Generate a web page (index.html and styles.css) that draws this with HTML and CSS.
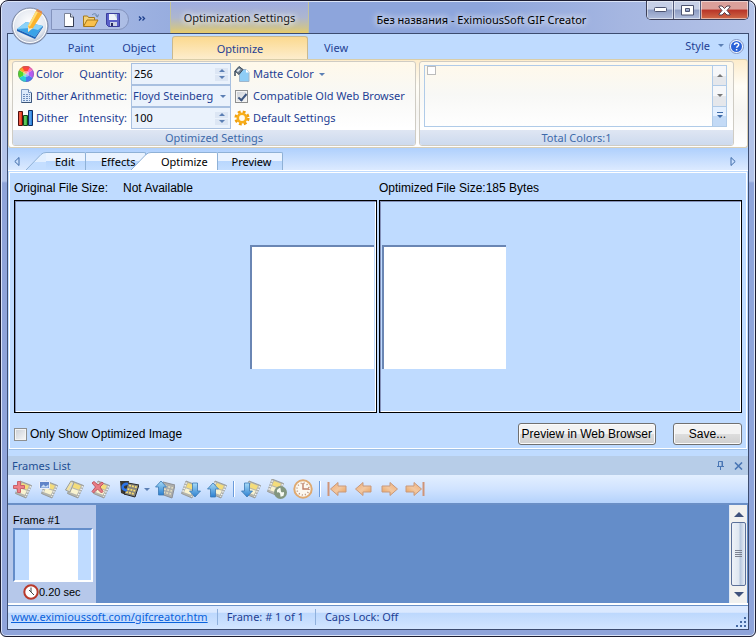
FILE: index.html
```html
<!DOCTYPE html>
<html lang="en">
<head>
<meta charset="utf-8">
<title>Без названия - EximiousSoft GIF Creator</title>
<link rel="stylesheet" href="styles.css">
</head>
<body>
<svg class="defs" aria-hidden="true">
  <defs>
    <linearGradient id="gBlue" x1="0" y1="0" x2="0" y2="1"><stop offset="0" stop-color="#a8dcf8"/><stop offset="1" stop-color="#2b7fd0"/></linearGradient>
    <linearGradient id="gArrow" x1="0" y1="0" x2="1" y2="1"><stop offset="0" stop-color="#f0ac70"/><stop offset=".5" stop-color="#f2c8a2"/><stop offset="1" stop-color="#e89c50"/></linearGradient>
    <radialGradient id="gOrb" cx=".5" cy=".4" r=".6"><stop offset="0" stop-color="#fff"/><stop offset=".7" stop-color="#e3e8f0"/><stop offset="1" stop-color="#a9b3c8"/></radialGradient>
    <g id="film">
      <path d="M8 2l11.500 4.500L14 19 3.500 14.500z" fill="#b4b2a6" stroke="#8a897f" stroke-width=".8"/>
      <path d="M10 4l7 2.800-1.900 4-7-2.600z" fill="#f8dc6c"/>
      <path d="M7.800 9.200l7 2.600-2 4-6.800-2.600z" fill="#fff6cc"/>
      <path d="M8.300 3.500L4.400 13.800M18.600 7.200L13.700 18" stroke="#fff" stroke-width="1.400" stroke-dasharray="1.400 1.400" fill="none"/>
    </g>
    <path id="up" d="M6 2l5.500 6H8.500v8H3.500V8H.5z" fill="url(#gBlue)" stroke="#3b78b4" stroke-width=".8"/>
    <path id="down" d="M6 16l5.500-6H8.500V2H3.500v8H.5z" fill="url(#gBlue)" stroke="#3b78b4" stroke-width=".8"/>
    <path id="arrowL" d="M1.500 10L9 3.500v3.500h8v6H9v3.500z" fill="url(#gArrow)" stroke="#c8997c" stroke-width="1"/>
  </defs>
</svg>
<div class="window">
  <header class="titlebar">
    <div class="quick">
      <button class="bare" aria-label="New"><svg width="16" height="16" viewBox="0 0 16 16"><path d="M3.500 1.500h6l3 3.500v9.500h-9z" fill="#fff" stroke="#7c8498"/><path d="M9.500 1.500V5h3" fill="#d5dcea" stroke="#4f586e"/><path d="M12.500 5v9.500h-9" fill="none" stroke="#343c52"/></svg></button>
      <button class="bare" aria-label="Open"><svg width="18" height="16" viewBox="0 0 18 16"><path d="M1.500 14V4h4l1 1.500h6V8" fill="#f4d27a" stroke="#a67a1c"/><path d="M1.500 14.500L5 8h11l-3.500 6.500z" fill="#f9c04c" stroke="#a8781a"/><path d="M10 3c2-2 4.500-1.500 5 1M13.500 3.500l2 1.500 1-2.500" fill="none" stroke="#6785a8"/></svg></button>
      <button class="bare" aria-label="Save file"><svg width="16" height="16" viewBox="0 0 16 16"><path d="M1.500 1.500h13v13h-11l-2-2z" fill="#5a60c8" stroke="#3a3e9c"/><path d="M4 2h8v6H4z" fill="#eef2fb"/><path d="M9 2h3v5z" fill="#bcd"/><path d="M5 10h7v4H5z" fill="#c9d2e6"/><path d="M6 11h2v3H6z" fill="#262a60"/></svg></button>
    </div>
    <button class="bare chevrons" aria-label="Customize"><svg width="8" height="5" viewBox="0 0 8 5"><path d="M1 .5l2 2-2 2M4.500.5l2 2-2 2" fill="none" stroke="#1d3f8c" stroke-width="1.300"/></svg></button>
    <div class="context">Optimization Settings</div>
    <h1 class="caption">Без названия - EximiousSoft GIF Creator</h1>
    <div class="winbtns">
      <button aria-label="Minimize"><svg width="13" height="6" viewBox="0 0 13 6"><rect x=".5" y=".5" width="12" height="4" rx="1" fill="#fff" stroke="#4c5370"/></svg></button>
      <button aria-label="Maximize"><svg width="13" height="11" viewBox="0 0 13 11"><path d="M.5.5h12v9.500H.5zM4.500 3.500v3h4v-3z" fill="#fff" stroke="#4c5370" fill-rule="evenodd"/></svg></button>
      <button class="x" aria-label="Close"><svg width="13" height="11" viewBox="0 0 13 11"><path d="M1 1h3l2.500 2.500L9 1h3v1L9 5.500 12 9v1H9L6.500 7.500 4 10H1V9l3-3.500L1 2z" fill="#fff" stroke="#56404c"/></svg></button>
    </div>
  </header>
  <button class="orb bare" aria-label="Application menu"><svg width="38" height="38" viewBox="0 0 38 38"><circle cx="19" cy="19" r="18" fill="url(#gOrb)" stroke="#7884a0"/><circle cx="19" cy="19" r="16.500" fill="none" stroke="#fff"/><path d="M6 22l9-7 17 4-8 11z" fill="#3aa3e8"/><path d="M6 22l9-7 17 4-5 4-8-2z" fill="#8bd2f8"/><path d="M6 22v2l18 8 8-12v-1l-8 11z" fill="#1a62b8"/><path d="M17 19L25 4l6 3-9 14-5 4z" fill="#fbb32c"/><path d="M19 19.500L27 5l-2-1-8 15z" fill="#fde07c"/><path d="M25 4l1-2 5 2.500V7z" fill="#e08a4c"/><path d="M17 19l1 2.500 4-.5-5 4z" fill="#fbe8cc"/></svg></button>

  <main class="client">
    <nav class="ribbon-tabs">
      <button class="rtab paint">Paint</button>
      <button class="rtab">Object</button>
      <button class="rtab active">Optimize</button>
      <button class="rtab view">View</button>
      <span class="grow"></span>
      <button class="style">Style <i class="tri"></i></button>
      <button class="bare help" aria-label="Help"><svg width="15" height="15" viewBox="0 0 15 15"><circle cx="7.500" cy="7.500" r="7" fill="#f4f8ff" stroke="#7f95c4"/><circle cx="7.500" cy="7.500" r="5.500" fill="#2b63d8"/><path d="M5.500 6c0-2.500 4.200-2.500 4.200-.2 0 1.500-2 1.500-2.100 3M7.600 10v1.600" fill="none" stroke="#fff" stroke-width="1.500"/></svg></button>
    </nav>

    <section class="ribbon">
      <div class="group settings">
        <div class="fields">
          <svg width="16" height="16" viewBox="0 0 16 16"><path d="M8 8V0a8 8 0 0 1 6.900 4z" fill="#ff6cc0"/><path d="M8 8l6.900-4a8 8 0 0 1 0 8z" fill="#b45cf0"/><path d="M8 8l6.900 4A8 8 0 0 1 8 16z" fill="#4878f5"/><path d="M8 8v8a8 8 0 0 1-6.900-4z" fill="#28d0d8"/><path d="M8 8l-6.900 4a8 8 0 0 1 0-8z" fill="#50d828"/><path d="M8 8L1.100 4A8 8 0 0 1 8 0z" fill="#ffa828"/><path d="M4 1.100A8 8 0 0 1 12 1.100L8 8z" fill="#ff4838"/><circle cx="8" cy="8" r="3" fill="#fff" opacity=".45"/><circle cx="8" cy="8" r="7.500" fill="none" stroke="#768" opacity=".4"/></svg>
          <label class="pair" for="qty"><span>Color</span><span>Quantity:</span></label>
          <div class="field"><input id="qty" type="text" value="256"><span class="spin"><button aria-label="More colors"><i class="tri up"></i></button><button aria-label="Fewer colors"><i class="tri"></i></button></span></div>
          <button class="cmd"><svg width="16" height="16" viewBox="0 0 16 16"><path d="M5.500 3.500h7l2.500 3v9h-9.500z" fill="#8fcdf6" stroke="#9fb6cc"/><path d="M12 3l3 3.500h-3z" fill="#fff"/><path d="M1 5l4-4.500 4 3-4 5z" fill="#718090" stroke="#3a4a5c"/><path d="M2.500 5L5 2.500l1.500 1L4 6z" fill="#e9eef4"/><path d="M1 5v5" stroke="#3a4a5c" stroke-width="1.500"/></svg>Matte Color <i class="tri"></i></button>

          <svg width="16" height="16" viewBox="0 0 16 16"><path d="M3.500 1.500h7l3 3v10h-10z" fill="#dceafb" stroke="#7f9cc4"/><path d="M13.500 5v9.500h-10" fill="none" stroke="#3c5578"/><path d="M10.500 1.500v3h3" fill="#fff" stroke="#6f8db8"/><path d="M5 6.500h7M5 8.500h7M5 10.500h7M5 12.500h7" stroke="#6d8cba" stroke-dasharray="2 1"/></svg>
          <label class="pair" for="dither"><span>Dither</span><span>Arithmetic:</span></label>
          <div class="field"><select id="dither"><option>Floyd Steinberg</option></select><i class="tri drop"></i></div>
          <label class="cmd check"><input type="checkbox" checked>Compatible Old Web Browser</label>

          <svg width="16" height="16" viewBox="0 0 16 16"><path d="M.5 1.500h4v14h-4z" fill="#e8381c" stroke="#501010"/><path d="M5.500 5.500h4v10h-4z" fill="#3cb83c" stroke="#104818"/><path d="M10.500.5h4v15h-4z" fill="#3088e0" stroke="#102c60"/><path d="M2 2v13M7 6v9M12 1v14" stroke="#fff" opacity=".35"/></svg>
          <label class="pair" for="intensity"><span>Dither</span><span>Intensity:</span></label>
          <div class="field"><input id="intensity" type="text" value="100"><span class="spin"><button aria-label="Raise intensity"><i class="tri up"></i></button><button aria-label="Lower intensity"><i class="tri"></i></button></span></div>
          <button class="cmd"><svg width="16" height="16" viewBox="0 0 16 16"><circle cx="8" cy="8" r="6.300" fill="none" stroke="#f0a010" stroke-width="2.600" stroke-dasharray="2.800 2.150"/><circle cx="8" cy="8" r="4.200" fill="#fffaf0" stroke="#f8ae18" stroke-width="2.600"/></svg>Default Settings</button>
        </div>
        <h2>Optimized Settings</h2>
      </div>
      <div class="group colors">
        <div class="gallery">
          <div class="swatches"><button class="swatch" aria-label="White"></button></div>
          <div class="gscroll"><button aria-label="Scroll up"><i class="tri up"></i></button><button aria-label="Scroll down"><i class="tri"></i></button><button class="more" aria-label="All colors"><i class="tri bar"></i></button></div>
        </div>
        <h2>Total Colors:1</h2>
      </div>
    </section>

    <nav class="doc-tabs">
      <button class="bare nav" aria-label="Previous tabs"><svg width="6" height="9" viewBox="0 0 6 9"><path d="M5 .5v8L.8 4.500z" fill="none" stroke="#3f6ba8"/></svg></button>
      <button class="dtab edit"><svg class="slant" width="20" height="18" viewBox="0 0 20 18"><path d="M0 18L15 2.500Q17 .5 20 .5V18z" fill="#e2efff"/><path d="M8 10h12v8H0z" fill="#c4deff"/><path d="M0 18L15 2.500Q17 .5 20 .5" fill="none" stroke="#8fb1d6"/></svg><span>Edit</span></button>
      <button class="dtab effects"><span>Effects</span></button>
      <button class="dtab current"><svg class="slant" width="20" height="18" viewBox="0 0 20 18"><path d="M0 18L15 2.500Q17 .5 20 .5V18z" fill="#fff"/><path d="M0 18L15 2.500Q17 .5 20 .5" fill="none" stroke="#8fb1d6"/></svg><span>Optimize</span></button>
      <button class="dtab preview"><span>Preview</span></button>
      <span class="grow"></span>
      <button class="bare nav" aria-label="Next tabs"><svg width="6" height="9" viewBox="0 0 6 9"><path d="M1 .5v8l4.200-4z" fill="none" stroke="#3f6ba8"/></svg></button>
    </nav>

    <section class="page">
      <div class="views">
        <div class="view-col">
          <p><span>Original File Size:</span><span class="value">Not Available</span></p>
          <div class="pane left"><div class="canvas"></div></div>
        </div>
        <div class="view-col">
          <p>Optimized File Size:185 Bytes</p>
          <div class="pane"><div class="canvas"></div></div>
        </div>
      </div>
      <div class="actions">
        <label class="only"><input type="checkbox">Only Show Optimized Image</label>
        <span class="grow"></span>
        <button class="push">Preview in Web Browser</button>
        <button class="push save">Save...</button>
      </div>
    </section>

    <section class="frames">
      <div class="frames-head">
        <h2>Frames List</h2>
        <button class="bare" aria-label="Pin"><svg width="8" height="9" viewBox="0 0 8 9"><path d="M1.500 5.500v-5h4v5M5 .5v5M0 5.500h7M3.500 5.500V9" fill="none" stroke="#4a76b4"/></svg></button>
        <button class="bare" aria-label="Close panel"><svg width="9" height="8" viewBox="0 0 9 8"><path d="M1 .5l7 7M8 .5l-7 7" stroke="#4a76b4" stroke-width="1.600"/></svg></button>
      </div>
      <div class="toolbar">
        <button class="tool" aria-label="Add frame"><svg viewBox="0 0 20 20"><g class="soft"><use href="#film"/></g><path d="M5.500 2.500h3v4h4v3h-4v4h-3v-4h-4v-3h4z" fill="#ee8088" stroke="#c8626c"/></svg></button>
        <button class="tool" aria-label="Add image"><svg viewBox="0 0 20 20"><g class="soft"><use href="#film"/></g><path d="M1.500 2.500h10v7h-10z" fill="#5f84c8" stroke="#e8eefa"/><path d="M2.500 8.500l3-3 2 2 3-2v3z" fill="#c7dcf4"/></svg></button>
        <button class="tool" aria-label="Edit frame"><svg viewBox="0 0 20 20"><g class="soft"><use href="#film"/><path d="M1.500 11L7 2l3 1.500L6 13z" fill="#d8d6c8" stroke="#989888"/><path d="M3.500 11l4-7" stroke="#fbe48c" stroke-width="1.600"/></g></svg></button>
        <button class="tool" aria-label="Delete frame"><svg viewBox="0 0 20 20"><g class="soft"><use href="#film"/></g><path d="M2 4l2-1.500 4 3.500 4-3 1.500 1.500L10 8l3 4.500-1.500 1.500-4-4L3.500 14 2 12.500 5.500 8z" fill="#e87c84" stroke="#c05862"/></svg></button>
        <button class="tool wide" aria-label="Rotate frame"><svg viewBox="0 0 20 20"><path d="M1 2h9l-3 14-5-2z" fill="#3c3830"/><path d="M9 4l11 2-4 12-11-3z" fill="#88867c" stroke="#282828"/><path d="M10 6.500l8 2M8.500 10l8 2M7 13l8 2" stroke="#f8dc70" stroke-width="1.800" stroke-dasharray="2 1"/><path d="M9 5C2 4 2 12 8 11" fill="none" stroke="#2c74e8" stroke-width="2.600"/></svg></button>
        <i class="tri menu"></i>
        <button class="tool" aria-label="Move first"><svg viewBox="0 0 20 20"><g class="soft"><path d="M8 3l12 3-3 13-11-4z" fill="#aaa9a4" stroke="#85868a"/><path d="M10 7l8 2M9 10l8 2M8 13l8 2" stroke="#e8dfbc" stroke-dasharray="2 1.300" stroke-width="1.600"/></g><use href="#up"/></svg></button>
        <button class="tool" aria-label="Move last"><svg viewBox="0 0 20 20"><g class="soft"><use href="#film" x="-3"/></g><use href="#down" x="8" y="2"/></svg></button>
        <button class="tool" aria-label="Move up"><svg viewBox="0 0 20 20"><g class="soft"><use href="#film"/></g><use href="#up" y="2"/></svg></button>
        <i class="sep"></i>
        <button class="tool" aria-label="Move down"><svg viewBox="0 0 20 20"><g class="soft"><use href="#film"/></g><use href="#down" y="2"/></svg></button>
        <button class="tool" aria-label="Frame properties"><svg viewBox="0 0 20 20"><g class="soft"><use href="#film" x="-3" y="-2"/></g><circle cx="13.500" cy="13.500" r="6.500" fill="#83967f"/><path d="M10.500 10.500l6 6M10 12.500l3-.5-.5-3M17 14l-3 .5.5 3" stroke="#f6faf4" stroke-width="1.800" fill="none"/></svg></button>
        <button class="tool" aria-label="Frame delay"><svg viewBox="0 0 20 20"><circle cx="10" cy="10" r="8.700" fill="#fcf8f0" stroke="#dfa970" stroke-width="2"/><circle cx="10" cy="10" r="6" fill="none" stroke="#b89480" stroke-width="1.600" stroke-dasharray="1 2.140"/><path d="M10 4v6h6" fill="none" stroke="#c08068" stroke-width="1.400"/></svg></button>
        <i class="sep"></i>
        <button class="tool" aria-label="First frame"><svg viewBox="0 0 20 20"><path d="M1.500 3v14" stroke="#cf9478" stroke-width="2"/><use href="#arrowL" x="2"/></svg></button>
        <button class="tool" aria-label="Previous frame"><svg viewBox="0 0 20 20"><use href="#arrowL" x="1"/></svg></button>
        <button class="tool" aria-label="Next frame"><svg viewBox="0 0 20 20"><use href="#arrowL" transform="matrix(-1 0 0 1 20 0)"/></svg></button>
        <button class="tool" aria-label="Last frame"><svg viewBox="0 0 20 20"><path d="M18.500 3v14" stroke="#cf9478" stroke-width="2"/><use href="#arrowL" transform="matrix(-1 0 0 1 18 0)"/></svg></button>
      </div>
      <div class="strip">
        <div class="frame">
          <span>Frame #1</span>
          <div class="thumb"><div></div></div>
          <span class="delay"><svg width="16" height="16" viewBox="0 0 16 16"><circle cx="8" cy="8" r="6.700" fill="#fff" stroke="#b83a2c" stroke-width="2"/><path d="M8 3.500V8l3 3M8 8L6 6" fill="none" stroke="#444"/></svg>0.20 sec</span>
        </div>
        <div class="vscroll">
          <button class="bare" aria-label="Scroll frames up"><svg width="10" height="5" viewBox="0 0 10 5"><path d="M5 0l5 5H0z" fill="#3f527c"/></svg></button>
          <div class="thumbbar"><svg width="7" height="8" viewBox="0 0 7 8"><path d="M0 .5h7M0 2.500h7M0 4.500h7M0 6.500h7" stroke="#7d8290"/></svg></div>
          <button class="bare" aria-label="Scroll frames down"><svg width="10" height="5" viewBox="0 0 10 5"><path d="M5 5l5-5H0z" fill="#3f527c"/></svg></button>
        </div>
      </div>
    </section>

    <footer class="status">
      <a href="#">www.eximioussoft.com/gifcreator.htm</a>
      <span>Frame: # 1 of 1</span>
      <span>Caps Lock: Off</span>
      <svg class="grip" width="12" height="12" viewBox="0 0 12 12"><path d="M9 1h2v2H9zM5 5h2v2H5zM9 5h2v2H9zM1 9h2v2H1zM5 9h2v2H5zM9 9h2v2H9z" fill="#456aa4"/></svg>
    </footer>
  </main>
</div>
</body>
</html>
```
FILE: styles.css
```css
* { box-sizing: border-box; }
body { margin: 0; font: 11px/16px "Noto Sans", "Open Sans", sans-serif; color: #000; background: #fff; }
button, input, select { font: inherit; color: inherit; margin: 0; padding: 0; border: 0; background: none; }
svg { display: block; flex: none; }
h1, h2, p { margin: 0; font: inherit; }
.defs { position: absolute; width: 0; height: 0; }
.grow { flex: 1; }
.bare { display: flex; align-items: center; justify-content: center; }

.window {
  position: relative; display: flex; flex-direction: column; min-height: 100vh; padding: 0 6px 6px;
  border: 1px solid #1b1c30; border-radius: 8px 8px 6px 6px;
  background: linear-gradient(#b3c3e9 0, #b3c3e9 180px, #8fa4da 182px);
  box-shadow: inset 0 0 0 1px #dbe4f8;
}

/* title bar */
.titlebar {
  display: flex; align-items: stretch; height: 31px; margin: 1px -5px 0; padding-left: 49px;
  border-radius: 7px 7px 0 0;
  background: linear-gradient(90deg, #b4c4ea, #a2b5e2 100px, #8da5dc 240px, #8da5dc 480px, #a5b6e1 620px, #b4c3e8);
}
.quick { display: flex; align-items: center; gap: 6px; height: 21px; margin-top: 7px; padding: 0 7px 0 9px; border: 1px solid #8393bd; border-radius: 0 11px 11px 0; background: rgba(255,255,255,.15); }
.quick .bare { width: 16px; }
.chevrons { width: 26px; height: 32px; }
.context {
  width: 139px; margin-left: 15px; padding-top: 8px; text-align: center; color: #1a1a1a; white-space: nowrap;
  border: solid #c3c39c; border-width: 0 1px;
  background: linear-gradient(#9eade0, #adb6cf 50%, #cfc48e 85%, #e9cb68);
  text-shadow: 0 0 6px #fff, 0 0 6px #fff;
}
.caption { flex: 1; padding: 10px 0 0 8px; text-align: center; white-space: nowrap; text-shadow: 0 0 6px #fff, 0 0 8px #fff; }
.winbtns { display: flex; height: 19px; margin: -1px 5px 0 0; border: 1px solid #3d4058; border-top: 0; border-radius: 0 0 5px 5px; overflow: hidden; }
.winbtns button { display: flex; align-items: center; justify-content: center; width: 27px; border-right: 1px solid #52597a; background: linear-gradient(#c6cfe6 45%, #8d9cc3 50%, #b1bedd); box-shadow: inset 0 0 0 1px rgba(255,255,255,.5); }
.winbtns .x { width: 47px; border: 0; background: linear-gradient(#dba09a 45%, #b83428 50%, #d06a48); }
.orb { position: absolute; left: 10px; top: 6px; }

.client { flex: 1; display: flex; flex-direction: column; border: 1px solid #3c4c70; background: #bfdbff; }

/* ribbon tabs */
.ribbon-tabs { display: flex; align-items: stretch; height: 25px; padding: 0 4px 0 45px; color: #1e3f94; }
.rtab { width: 56px; padding-top: 2px; }
.paint { margin-right: 2px; }
.active { width: 136px; margin: 2px 0 -1px 5px; padding: 0; border: 1px solid #c9b98f; border-bottom: 0; border-radius: 3px 3px 0 0; background: linear-gradient(#fbd98f, #fdeed0); }
.style { display: flex; align-items: center; gap: 8px; margin-right: 5px; padding-bottom: 2px; }

.tri { display: inline-block; width: 0; height: 0; border: solid transparent; border-width: 3px 3px 0; border-top-color: #5b7fb4; }
.tri.up { border-width: 0 3px 3px; border-bottom-color: #5b7fb4; }
.tri.bar { position: relative; }
.tri.bar::before { content: ""; position: absolute; left: -3px; top: -6px; width: 6px; height: 1px; background: #3f6ba8; }

/* ribbon */
.ribbon { display: flex; gap: 3px; padding: 1px 13px 1px 3px; border: 1px solid #d9cfb6; border-top-color: #d9cda8; border-radius: 3px; background: linear-gradient(#fdeccb, #fffdf6 30%, #f6f5f2 60%, #fff); }
.group { display: flex; flex-direction: column; border: 1px solid #cfccc4; border-radius: 3px; background: linear-gradient(#fff9ea, #f8f8f6 40%, #fff 80%); overflow: hidden; color: #1e3f94; }
.settings { flex: none; width: 404px; }
.colors { flex: 1; }
.group h2 { height: 15px; line-height: 15px; text-align: center; color: #3e6aaa; background: linear-gradient(#dfe6f3, #cddaee); }
.fields { display: grid; grid-template-columns: 16px 93px 100px 1fr; grid-auto-rows: 22px; column-gap: 2px; align-items: center; height: 68px; padding: 1px 0 0 5px; }
.pair { display: flex; justify-content: space-between; padding-right: 2px; white-space: nowrap; }
.field { position: relative; display: flex; align-items: center; height: 22px; border: 1px solid #a8c0e0; background: #eaf2fc; }
.field input { width: 60px; flex: 1; padding-left: 2px; color: #000; }
.field select { width: 100%; padding-left: 1px; appearance: none; }
.drop { position: absolute; right: 4px; top: 9px; pointer-events: none; }
.spin { display: grid; gap: 1px; width: 13px; margin-right: 2px; }
.spin button { display: flex; align-items: center; justify-content: center; height: 6px; background: #dce6f4; }
.cmd { display: flex; align-items: center; gap: 3px; padding-left: 1px; text-align: left; white-space: nowrap; }
.cmd .tri { margin-left: 2px; }
input[type="checkbox"] { appearance: none; position: relative; flex: none; width: 13px; height: 13px; border: 1px solid #8e8f8f; background: linear-gradient(135deg, #c9ced6, #f8f8f8); box-shadow: inset 0 0 0 1px #f4f4f4; }
input[type="checkbox"]:checked::after { content: ""; position: absolute; left: 4px; top: 1px; width: 3px; height: 7px; border: solid #3d5680; border-width: 0 2px 2px 0; transform: rotate(40deg); }
.check { gap: 5px; padding-left: 2px; }
.gallery { display: flex; height: 62px; margin: 3px 6px 3px 4px; border: 1px solid #b0cbe8; }
.swatches { flex: 1; padding: 0 2px; }
.swatch { display: block; width: 9px; height: 9px; border: 1px solid #bbb; background: #fff; }
.gscroll { display: flex; flex-direction: column; width: 14px; border-left: 1px solid #b0cbe8; }
.gscroll button { flex: 1; display: flex; align-items: center; justify-content: center; border-bottom: 1px solid #b0cbe8; background: linear-gradient(#f6f7f9 50%, #e5e7eb 50%); }
.gscroll .tri { border-top-color: #777; }
.gscroll .tri.up { border-top-color: transparent; border-bottom-color: #777; }
.gscroll .more { border: 0; background: linear-gradient(#e4f0ff 50%, #c3daf6 50%); }
.gscroll .more .tri { border-top-color: #3f6ba8; }

/* document tabs */
.doc-tabs { display: flex; align-items: flex-end; height: 23px; padding: 0 12px 0 6px; border-bottom: 1px solid #fff; background: linear-gradient(#afd0fd, #dceaff); }
.nav { width: 6px; height: 18px; }
.dtab { display: flex; height: 18px; }
.dtab span { height: 18px; line-height: 17px; border: solid #8fb1d6; border-width: 1px 1px 0 0; border-radius: 0 2px 0 0; background: linear-gradient(#eaf3ff 50%, #b9d7fd 50%, #c4deff); }
.edit { margin-left: 6px; }
.edit span { width: 40px; padding-left: 9px; text-align: left; }
.effects span { width: 60px; padding-left: 15px; text-align: left; }
.current { margin-left: -15px; z-index: 1; }
.current span { width: 67px; padding-left: 10px; text-align: left; background: #fff; }
.preview span { width: 65px; padding-left: 3px; }

/* page */
.page { flex: 1; display: flex; flex-direction: column; margin: 1px 1px 0; padding: 7px 4px 1px; border: 1px solid #fff; box-shadow: 0 1px 0 #9dbfe6; font: 12px/16px "Liberation Sans", Arial, sans-serif; }
.views { flex: 1; display: flex; gap: 2px; }
.view-col { flex: 1; display: flex; flex-direction: column; }
.view-col p { height: 20px; }
.value { margin-left: 15px; }
.pane { flex: 1; display: flex; align-items: center; padding: 1px; min-height: 213px; border: 1px solid #000; box-shadow: inset 1px 1px 0 #8390b8, inset -1px -1px 0 #fff; }
.left { justify-content: flex-end; }
.canvas { width: 124px; height: 124px; margin: 0 1px; border: solid #6a86b4; border-width: 2px 0 0 2px; background: #fff; }
.actions { display: flex; align-items: center; gap: 17px; height: 26px; margin-top: 8px; }
.only { display: flex; align-items: center; gap: 3px; }
.push { height: 22px; padding: 0 3px; border: 1px solid #707070; border-radius: 3px; background: linear-gradient(#f3f3f3 48%, #dddddd 52%, #cfcfcf); box-shadow: inset 0 0 0 1px #fbfbfb; }
.save { width: 69px; }

/* frames */
.frames-head { display: flex; align-items: center; gap: 9px; height: 19px; margin-top: 7px; padding: 0 5px 0 4px; color: #1e4f94; background: #b7cde8; }
.frames-head h2 { flex: 1; }
.toolbar { display: flex; align-items: center; gap: 6px; height: 30px; padding-left: 4px; border-bottom: 2px solid #6a8fc6; background: linear-gradient(#e3efff, #d0e3ff 50%, #b4d2fb); }
.tool, .tool svg { width: 20px; height: 20px; }
.soft { opacity: .9; }
.wide { margin-left: 3px; }
.menu { margin: 0 -1px; }
.sep { width: 2px; height: 16px; border: solid #6a9bdc; border-width: 0 1px; border-right-color: #fff; }
.strip { display: flex; height: 98px; background: #648dc9; }
.frame { width: 88px; padding: 7px 3px 0 5px; background: #b6c8ea; font: 11px/16px "Liberation Sans", Arial, sans-serif; }
.thumb { display: flex; justify-content: center; height: 54px; border: 2px solid #fff; border-top-color: #648dc9; border-left-color: #648dc9; background: #bfdbff; }
.thumb div { width: 49px; background: #fff; }
.frame .delay { display: flex; align-items: center; height: 20px; padding-left: 10px; }
.vscroll { display: flex; flex-direction: column; width: 18px; margin: 0 1px 0 auto; padding: 1px; border-left: 1px solid #dfe8f4; background: #f1f1ef; }
.vscroll .bare { height: 16px; }
.thumbbar { flex: 1; display: flex; align-items: center; justify-content: center; border: 1px solid #5b7099; border-radius: 2px; background: linear-gradient(90deg, #eef2f8, #dfe7f1 50%, #b9c9df 65%, #e8eef6); }

/* status bar */
.status { display: flex; align-items: center; height: 26px; padding-left: 3px; border-top: 2px solid #fff; box-shadow: inset 0 1px 0 #6c93c9; background: linear-gradient(#dbe9ff 30%, #bdd8fd 35%, #d3e5ff); color: #1e3f94; }
.status a { color: #0a62dc; margin-right: 9px; }
.status span { padding: 0 11px 0 9px; border-left: 1px solid #8fb0dc; }
.grip { margin: auto 1px 1px auto; }
```
